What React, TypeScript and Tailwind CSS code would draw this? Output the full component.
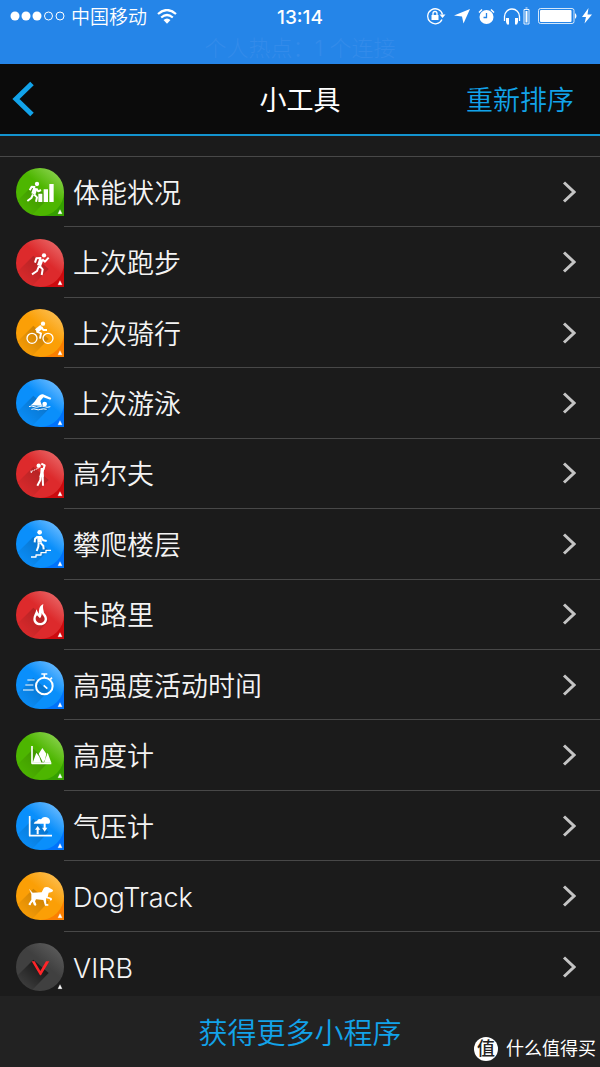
import React from 'react';

type Tone = 'green' | 'red' | 'orange' | 'blue' | 'dark';

interface Widget {
  id: string;
  label: string;
  tone: Tone;
  glyph: React.ReactNode;
}

const TONES: Record<Tone, { light: string; base: string; corner: string }> = {
  green: { light: '#86d048', base: '#4db600', corner: '#35a000' },
  red: { light: '#e86262', base: '#dd2a2c', corner: '#cc0a0e' },
  orange: { light: '#fcbc4c', base: '#fb9f06', corner: '#fa7f00' },
  blue: { light: '#64b8ff', base: '#0a8ffb', corner: '#0072fa' },
  dark: { light: '#5a5a5a', base: '#404040', corner: 'none' },
};

// All glyphs share the 144 x 144 box of the badge
const WIDGETS: Widget[] = [
  {
    id: 'fitness',
    label: '体能状况',
    tone: 'green',
    glyph: (
      <>
        <circle cx="63" cy="48" r="6.5" fill="#fff" stroke="none" />
        <path d="M58 60 52 78" strokeWidth="13" />
        <path d="M41 67l6-11 11 1M61 62l6 8 8-4M51 79l-5 11-12 9M54 79l9 9-3 13" strokeWidth="6" />
        <path d="M67 77h12v25H67zM83 64h13v38H83zM100 48h13v54h-13z" fill="#fff" stroke="none" />
      </>
    ),
  },
  {
    id: 'last-run',
    label: '上次跑步',
    tone: 'red',
    glyph: (
      <>
        <circle cx="84" cy="49" r="6.5" fill="#fff" stroke="none" />
        <path d="M76 61 69 80" strokeWidth="13" />
        <path d="M57 71l4-13 15-1M79 61l8 7 11-12M69 81l-6 15-15 10M71 81l9 10-3 17" strokeWidth="6" />
      </>
    ),
  },
  {
    id: 'last-ride',
    label: '上次骑行',
    tone: 'orange',
    glyph: (
      <>
        <circle cx="48" cy="88" r="15" strokeWidth="4" />
        <circle cx="96" cy="88" r="15" strokeWidth="4" />
        <circle cx="81" cy="44" r="6.5" fill="#fff" stroke="none" />
        <path d="M77 53 61 66" strokeWidth="13" />
        <path d="M76 54l6 9h11M61 67l14 6-3 16" strokeWidth="6" />
      </>
    ),
  },
  {
    id: 'last-swim',
    label: '上次游泳',
    tone: 'blue',
    glyph: (
      <>
        <circle cx="86" cy="75" r="7" fill="#fff" stroke="none" />
        <path d="M44 79C56 72 62 55 72 48Q76 45 81 46L106 57 103 62 82 55 73 66 78 80Z" fill="#fff" stroke="none" />
        <path d="M39 83q8-4 15 0t16 0 16 0 17 0M46 91q8-3 14 0t14 0 18 0" strokeWidth="3" />
      </>
    ),
  },
  {
    id: 'golf',
    label: '高尔夫',
    tone: 'red',
    glyph: (
      <>
        <circle cx="68" cy="47" r="6.5" fill="#fff" stroke="none" />
        <path d="M74 54h11l-2 14 1 12H70l3-12z" fill="#fff" stroke="none" />
        <path d="M76 41l10 5-4 13M74 78l-1 12-9 17M80 78l1 29" strokeWidth="6" />
        <path d="M68 54 45 65" strokeWidth="3" strokeDasharray="4 2" />
        <path d="M45 62l1 7" strokeWidth="3" />
      </>
    ),
  },
  {
    id: 'floors',
    label: '攀爬楼层',
    tone: 'blue',
    glyph: (
      <>
        <circle cx="71" cy="37" r="7" fill="#fff" stroke="none" />
        <path d="M70 48 71 68" strokeWidth="13" />
        <path d="M65 49l-8 8-1 10M74 50l8 11 10 2M68 68l-1 12-5 13M73 68l9 10 1 10" strokeWidth="6" />
        <path d="M45 111h15v-6h15v-7h15v-7h15" strokeWidth="4" />
      </>
    ),
  },
  {
    id: 'calories',
    label: '卡路里',
    tone: 'red',
    glyph: (
      <path
        d="M82 39C67 46 70 59 68 68L61 55C60 66 52 73 52 84 52 96 61 103 73 103 85 103 93 95 93 84 93 75 88 69 84 65 83 57 79 50 82 39ZM77 66C79 72 86 76 86 84 86 91 80 96 73 96 65 96 59 91 59 84 59 79 61 76 63 73L72 82C76 77 77 72 77 66Z"
        fill="#fff"
        fillRule="evenodd"
        stroke="none"
      />
    ),
  },
  {
    id: 'intensity',
    label: '高强度活动时间',
    tone: 'blue',
    glyph: (
      <>
        <circle cx="85" cy="75" r="25" strokeWidth="6" />
        <path d="M85 50V40M76 39h18M103 55l5-5M83 73l11 10" strokeWidth="5" />
        <path d="M34 57h22M28 72h24M21 87h32" strokeWidth="3" />
      </>
    ),
  },
  {
    id: 'altimeter',
    label: '高度计',
    tone: 'green',
    glyph: (
      <>
        <path d="M48 42v52h58" strokeWidth="5" />
        <path d="M51 90 61 62l9 12 6 18H51zM68 66l11-18 12 17-4 18-6 9zM84 92l11-30 11 30z" fill="#fff" stroke="none" />
      </>
    ),
  },
  {
    id: 'barometer',
    label: '气压计',
    tone: 'blue',
    glyph: (
      <>
        <path d="M41 42v59h67" strokeWidth="5" />
        <path d="M53 65q2-8 10-8 3-8 12-5 6-9 17-6 11 3 10 15-2 6-8 4z" fill="#fff" stroke="none" />
        <path d="M65 97V80M86 62v18" strokeWidth="6" />
        <path d="M57 83l8-11 8 11zM78 77l8 12 8-12z" fill="#fff" stroke="none" />
      </>
    ),
  },
  {
    id: 'dogtrack',
    label: 'DogTrack',
    tone: 'orange',
    glyph: (
      <path
        d="M39 50 50 62 77 61 84 47Q90 43 97 46L111 54Q112 60 105 61L98 62 95 74 107 78 108 84 103 86 101 81 90 79 91 96 97 97V101H87L82 84 60 82 57 88 61 97 60 101 54 100 50 89 45 95 44 100 38 99 38 95 46 83 46 66Z"
        fill="#fff"
        stroke="none"
      />
    ),
  },
  {
    id: 'virb',
    label: 'VIRB',
    tone: 'dark',
    glyph: <path d="M47 55h9l17 29 17-29h10L75 97h-3Z" fill="#ff2529" stroke="none" />,
  },
];

function WidgetBadge({ id, tone, children }: { id: string; tone: Tone; children: React.ReactNode }) {
  const t = TONES[tone];
  return (
    <svg viewBox="0 0 144 144" className="size-12 shrink-0" fill="none" aria-hidden="true">
      <defs>
        <linearGradient id={`${id}-face`} x1="0.85" y1="0.1" x2="0.35" y2="0.7">
          <stop offset="0" stopColor={t.light} />
          <stop offset="0.55" stopColor={t.base} />
        </linearGradient>
        <linearGradient id={`${id}-shade`} x1="0.8" y1="0.2" x2="0.2" y2="0.8">
          <stop offset="0" stopColor="#000" stopOpacity={tone === 'dark' ? 0.6 : 0.18} />
          <stop offset="1" stopColor="#000" stopOpacity="0" />
        </linearGradient>
        <clipPath id={`${id}-clip`}>
          <circle cx="72" cy="72" r="72" />
        </clipPath>
      </defs>
      {tone !== 'dark' && <path d="M72 72h72v72H72z" fill={t.corner} />}
      <circle cx="72" cy="72" r="72" fill={`url(#${id}-face)`} />
      <path d="M52 50 98 90 40 150-10 112Z" fill={`url(#${id}-shade)`} clipPath={`url(#${id}-clip)`} />
      <g stroke="#fff" strokeLinejoin="round">
        {children}
      </g>
      <path d="M132 125l6 12h-12z" fill="#fff" stroke="#fff" strokeWidth="1" />
    </svg>
  );
}

function StatusBar() {
  return (
    <div className="h-16 bg-[#2585e8] text-white">
      <div className="grid h-8 grid-cols-[1fr_auto_1fr] items-center px-2">
        <div className="flex items-center pl-0.5">
          <svg viewBox="0 0 55 10" className="h-2.5 w-[55px]" fill="#fff" aria-hidden="true">
            <circle cx="5" cy="5" r="4.5" />
            <circle cx="16" cy="5" r="4.5" />
            <circle cx="27" cy="5" r="4.5" />
            <circle cx="38.500" cy="5" r="4" fill="none" stroke="#fff" />
            <circle cx="50" cy="5" r="4" fill="none" stroke="#fff" />
          </svg>
          <span className="ml-1.5 pt-1 text-[19px] leading-7 font-[350]">中国移动</span>
          <svg viewBox="0 0 20 15" className="ml-2.5 h-[15px] w-5" fill="none" stroke="#fff" strokeWidth="2.200" aria-hidden="true">
            <path d="M1 5Q10-3 19 5M4.200 8.500Q10 3.500 15.800 8.500" />
            <path d="M6.500 11Q10 8 13.500 11L10 14.800Z" fill="#fff" stroke="none" />
          </svg>
        </div>
        <span className="pt-1 text-[19px] leading-7 font-medium">13:14</span>
        <div className="flex items-center justify-end">
          {/* rotation lock */}
          <svg viewBox="0 0 20 18" className="h-[18px] w-5" fill="none" stroke="#fff" strokeWidth="1.300" aria-hidden="true">
            <path d="M16 12.500A7.500 7.500 0 1 1 16.500 7.500" />
            <path d="M13.500 7.500h6L16.500 11z" fill="#fff" stroke="none" />
            <path d="M5.500 8h7v5h-7z" fill="#fff" stroke="none" />
            <path d="M7 8V6.500a2 2 0 0 1 4 0V8" />
          </svg>
          <svg viewBox="0 0 16 16" className="ml-2 size-4" fill="#fff" aria-hidden="true">
            <path d="M16 1 9.500 15.500 8 8.500 0 7.500Z" />
          </svg>
          {/* alarm */}
          <svg viewBox="0 0 17 17" className="ml-2 size-[17px]" fill="none" stroke="#fff" aria-hidden="true">
            <circle cx="8.500" cy="9" r="7" fill="#fff" stroke="none" />
            <path d="M1 4.500 4 1.500M16 4.500 13 1.500" strokeWidth="1.500" />
            <path d="M8.500 5V9.500H5.500" stroke="#2585e8" strokeWidth="1.300" />
          </svg>
          {/* headphones with their own battery */}
          <svg viewBox="0 0 27 18" className="ml-2 h-[18px] w-[27px]" fill="none" stroke="#fff" aria-hidden="true">
            <path d="M1.500 14V9.500a7.500 7.500 0 0 1 15 0V14" strokeWidth="1.300" />
            <path d="M3 11h3v6.500H4L3 15zM15 11h-3v6.500h2l1-2.500z" fill="#fff" stroke="none" />
            <path d="M21 2.500h5v14.500h-5zM22.500 1h2" strokeWidth="0.900" />
            <path d="M22.500 4h2v11.500h-2z" fill="#fff" stroke="none" />
          </svg>
          <svg viewBox="0 0 40 16" className="ml-2 h-4 w-10" fill="none" stroke="#fff" aria-hidden="true">
            <rect x="0.500" y="0.500" width="35.500" height="15" rx="2" opacity="0.8" />
            <rect x="2" y="2" width="31.500" height="12" rx="1" fill="#fff" stroke="none" />
            <path d="M37 5q3 3 0 6z" fill="#fff" stroke="none" />
          </svg>
          <svg viewBox="0 0 10 16" className="ml-1 h-4 w-2.5" fill="#fff" aria-hidden="true">
            <path d="M6.500 0 0 9h4L2.500 15.500 10 6.500H5.500Z" />
          </svg>
        </div>
      </div>
      <p className="text-center text-[22px] leading-8 font-light text-[#338bea]">个人热点：1 个连接</p>
    </div>
  );
}

function NavBar() {
  return (
    <header className="grid h-[72px] grid-cols-[1fr_auto_1fr] items-center border-b-2 border-[#1393cf] bg-[#0b0b0b] px-3">
      <button type="button" aria-label="返回" className="justify-self-start">
        <svg viewBox="0 0 24 36" className="h-9 w-6" fill="none" stroke="#12a3ea" strokeWidth="5" aria-hidden="true">
          <path d="M20 2.500 4 18 20 33.500" />
        </svg>
      </button>
      <h1 className="pt-1 text-[27px] leading-10 font-normal text-white">小工具</h1>
      <button type="button" className="justify-self-end pt-1 pr-3.5 text-[27px] leading-10 font-[350] text-[#12a3ea]">
        重新排序
      </button>
    </header>
  );
}

function WidgetRow({ widget, last }: { widget: Widget; last: boolean }) {
  return (
    <li className="flex min-h-[70px] flex-1">
      <a href={`#${widget.id}`} className="flex flex-1 items-stretch pl-4">
        <span className="flex items-center">
          <WidgetBadge id={widget.id} tone={widget.tone}>
            {widget.glyph}
          </WidgetBadge>
        </span>
        <span className={`flex flex-1 items-center justify-between pl-[9px] pr-6 ${last ? '' : 'border-b border-[#484848]'}`}>
          <span className="pt-1 text-[27px] leading-10 font-[350] text-[#f4f4f4]">{widget.label}</span>
          <svg viewBox="0 0 14 22" className="h-[22px] w-3.5" fill="none" stroke="#c4c4c4" strokeWidth="3" aria-hidden="true">
            <path d="M2 1.500 12 11 2 20.500" />
          </svg>
        </span>
      </a>
    </li>
  );
}

export default function App() {
  return (
    <div className="flex min-h-screen flex-col bg-[#1b1b1b] font-['Inter','Noto_Sans_CJK_SC',sans-serif]">
      <StatusBar />
      <NavBar />
      <main className="flex flex-1 flex-col">
        <div className="h-[21px] border-b border-[#484848]" />
        <ul className="-mb-1.5 flex flex-1 flex-col">
          {WIDGETS.map((widget, i) => (
            <WidgetRow key={widget.id} widget={widget} last={i === WIDGETS.length - 1} />
          ))}
        </ul>
      </main>
      <footer className="relative flex h-[71px] items-center justify-center bg-[#222222]">
        <button type="button" className="pt-1 text-[29px] leading-10 font-[350] text-[#12a3ea]">
          获得更多小程序
        </button>
        <div className="absolute right-1 bottom-1.5 flex items-center gap-2 text-white">
          <span className="flex size-6 items-center justify-center rounded-full bg-white text-[18px] leading-6 font-medium text-[#222222]">
            值
          </span>
          <span className="text-[18px] leading-6">什么值得买</span>
        </div>
      </footer>
    </div>
  );
}
